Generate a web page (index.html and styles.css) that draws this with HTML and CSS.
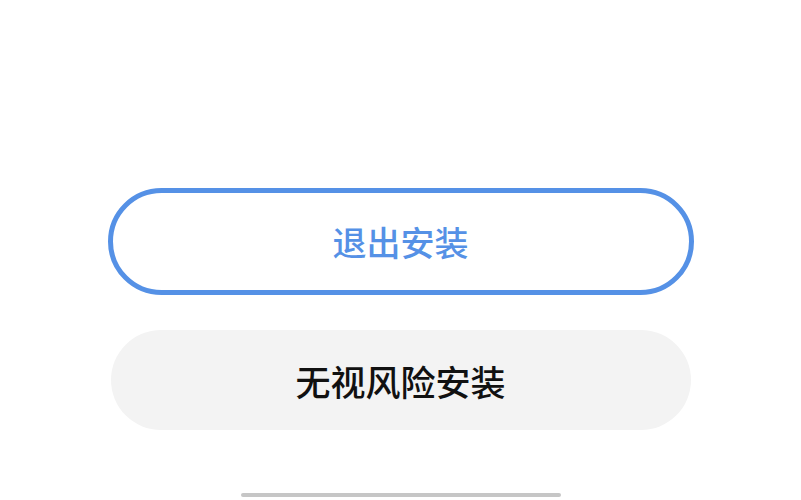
FILE: index.html
```html
<!DOCTYPE html>
<html lang="zh-CN">
<head>
<meta charset="utf-8">
<link rel="stylesheet" href="styles.css">
</head>
<body>
<div class="screen">
  <div class="actions">
    <button class="btn btn-exit">退出安装</button>
    <button class="btn btn-risk">无视风险安装</button>
  </div>
  <div class="home-indicator"></div>
</div>
</body>
</html>
```
FILE: styles.css
```css
html, body {
  margin: 0;
  padding: 0;
  background: #ffffff;
}
.screen {
  width: 801px;
  height: 500px;
  display: flex;
  flex-direction: column;
  align-items: center;
  font-family: "Noto Sans CJK SC", "Noto Sans", sans-serif;
}
.actions {
  display: flex;
  flex-direction: column;
  align-items: center;
  gap: 35px;
  padding-top: 188px;
}
.btn {
  box-sizing: border-box;
  border-radius: 60px;
  font-family: inherit;
  font-weight: 500;
  display: flex;
  align-items: center;
  justify-content: center;
  padding: 0;
  cursor: pointer;
}
.btn-exit {
  width: 586px;
  height: 107px;
  border: 5px solid #5591e6;
  background: #ffffff;
  color: #5591e6;
  font-size: 34px;
}
.btn-risk {
  width: 580px;
  height: 100px;
  border: none;
  background: #f3f3f3;
  color: #111111;
  font-size: 35px;
}
.home-indicator {
  margin-top: 63px;
  width: 320px;
  height: 4px;
  border-radius: 2px;
  background: #c6c6c6;
}
```
